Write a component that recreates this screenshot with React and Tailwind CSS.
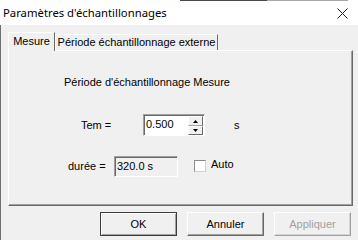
import React from "react";

const ui = { fontFamily: '"Liberation Sans", Arial, sans-serif' };

function SpinInput() {
  return (
    <div className="flex h-[22px] w-[62px] border border-t-[#a0a0a0] border-l-[#a0a0a0] border-r-white border-b-white bg-white shadow-[inset_1px_1px_0_#696969]">
      <div className="flex-1 pl-[2px] pt-[3px] text-[11px] leading-[13px] text-black">0.500</div>
      <div className="mr-[1px] mt-[1px] flex w-[15px] flex-col">
        <div className="flex h-[10px] items-center justify-center border border-t-white border-l-white border-r-[#696969] border-b-[#a0a0a0] bg-[#f0f0f0]">
          <svg width="5" height="3" viewBox="0 0 5 3"><path d="M2.5 0 L5 3 L0 3 Z" fill="#000" /></svg>
        </div>
        <div className="flex h-[9px] items-center justify-center border border-t-white border-l-white border-r-[#696969] border-b-[#696969] bg-[#f0f0f0]">
          <svg width="5" height="3" viewBox="0 0 5 3"><path d="M0 0 L5 0 L2.5 3 Z" fill="#000" /></svg>
        </div>
      </div>
    </div>
  );
}

function Button({ children, isDefault, disabled }) {
  let border = "border border-t-white border-l-white border-r-[#696969] border-b-[#696969] shadow-[inset_-1px_-1px_0_#a0a0a0]";
  if (isDefault) border = "border border-[#3c3c3c] shadow-[inset_1px_1px_0_#fff,inset_-1px_-1px_0_#a0a0a0]";
  if (disabled) border = "border border-t-white border-l-white border-r-[#a0a0a0] border-b-[#a0a0a0] shadow-[inset_-1px_-1px_0_#d4d4d4]";
  return (
    <div className={`flex h-[24px] w-[77px] items-center justify-center bg-[#f0f0f0] text-[11px] ${border} ${disabled ? "text-[#a0a0a0]" : "text-black"}`}>
      {children}
    </div>
  );
}

export default function App() {
  return (
    <div className="relative h-[240px] w-[358px] overflow-hidden bg-[#f0f0f0]" style={ui}>
      <div className="flex h-[25px] flex-col bg-white">
        <div className="flex h-px">
          <div className="w-[180px]" />
          <div className="w-[87px] bg-[#4a4a4a]" />
          <div className="w-[81px] bg-[#a8a8a8]" />
        </div>
        <div className="flex flex-1 items-center justify-between pl-[3px] pr-[10px]">
          <span className="text-[11.3px] text-black" style={{ fontFamily: '"Noto Sans", sans-serif' }}>
            Paramètres d'échantillonnages
          </span>
          <svg width="11" height="11" viewBox="0 0 11 11">
            <path d="M0.5 0.5 L10.5 10.5 M10.5 0.5 L0.5 10.5" stroke="#222" strokeWidth="1" />
          </svg>
        </div>
      </div>

      <div className="flex h-[215px] flex-col border-l border-[#707070]">
        <div className="mt-[7px] flex items-end pl-[7px]">
          <div className="relative z-10 mb-[-1px] flex h-[19px] w-[47px] items-center justify-center border border-b-0 border-t-white border-l-white border-r-[#696969] bg-[#f0f0f0] pb-[1px] text-[11px] text-black">
            Mesure
          </div>
          <div className="flex h-[16px] w-[163px] items-center justify-center border border-b-0 border-t-white border-l-white border-r-[#696969] text-[11px] text-black">
            Période échantillonnage externe
          </div>
        </div>

        <div className="ml-[7px] flex h-[156px] w-[345px] flex-col border border-t-white border-l-white border-r-[#696969] border-b-[#696969] shadow-[inset_-1px_-1px_0_#a0a0a0] text-[11px] text-black">
          <div className="ml-[55px] mt-[25px] leading-[13px]">Période d'échantillonnage Mesure</div>

          <div className="mt-[25px] flex items-center">
            <div className="ml-[72px] w-[62px]">Tem =</div>
            <SpinInput />
            <div className="ml-[29px]">s</div>
          </div>

          <div className="mt-[20px] flex items-center">
            <div className="ml-[59px] w-[46px]">durée =</div>
            <div className="flex h-[21px] w-[64px] items-center border border-t-[#a0a0a0] border-l-[#a0a0a0] border-r-white border-b-white pl-[2px] shadow-[inset_1px_1px_0_#696969]">
              320.0 s
            </div>
            <div className="ml-[16px] mb-[1px] h-[12px] w-[12px] border border-t-[#8a8a8a] border-l-[#8a8a8a] border-r-[#d0d0d0] border-b-[#d0d0d0] bg-white" />
            <div className="ml-[5px] mb-[4px]">Auto</div>
          </div>
        </div>

        <div className="mt-[6px] flex gap-[10px] pl-[99px]">
          <Button isDefault>OK</Button>
          <Button>Annuler</Button>
          <Button disabled>Appliquer</Button>
        </div>
      </div>
    </div>
  );
}
